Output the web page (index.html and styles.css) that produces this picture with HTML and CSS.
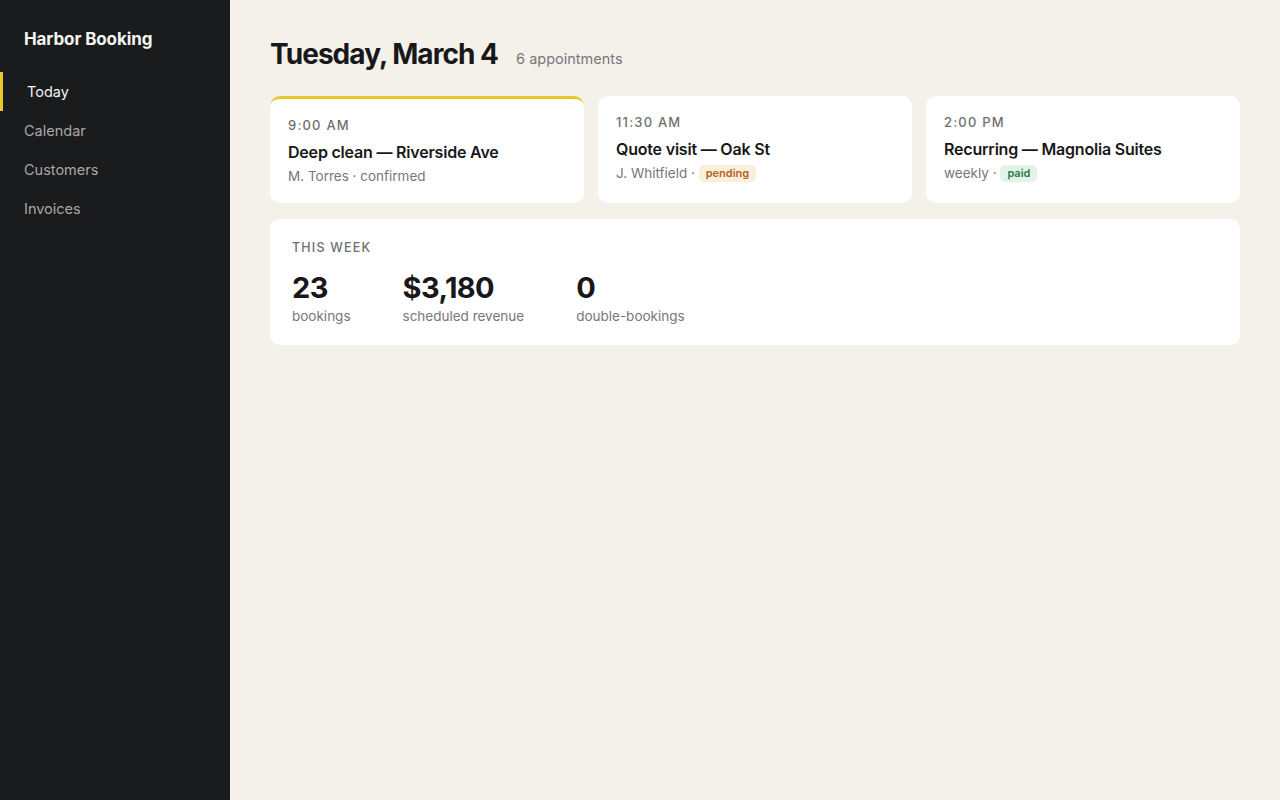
FILE: index.html
```
<!DOCTYPE html>
<html lang="en">
<head>
<meta charset="utf-8">
<title>Harbor Booking</title>
<link rel="stylesheet" href="styles.css">
</head>
<body>
<div class="app">
  <aside class="sidebar">
    <div class="brand">Harbor Booking</div>
    <nav class="nav">
      <a class="nav-item active">Today</a>
      <a class="nav-item">Calendar</a>
      <a class="nav-item">Customers</a>
      <a class="nav-item">Invoices</a>
    </nav>
  </aside>
  <main class="main">
    <header class="page-head">
      <h1>Tuesday, March 4</h1>
      <span class="count">6 appointments</span>
    </header>
    <section class="cards">
      <div class="card current">
        <div class="time">9:00 AM</div>
        <div class="title">Deep clean — Riverside Ave</div>
        <div class="meta">M. Torres · confirmed</div>
      </div>
      <div class="card">
        <div class="time">11:30 AM</div>
        <div class="title">Quote visit — Oak St</div>
        <div class="meta">J. Whitfield · <span class="badge pending">pending</span></div>
      </div>
      <div class="card">
        <div class="time">2:00 PM</div>
        <div class="title">Recurring — Magnolia Suites</div>
        <div class="meta">weekly · <span class="badge paid">paid</span></div>
      </div>
    </section>
    <section class="week">
      <div class="week-label">This week</div>
      <div class="stats">
        <div class="stat"><div class="num">23</div><div class="lbl">bookings</div></div>
        <div class="stat"><div class="num">$3,180</div><div class="lbl">scheduled revenue</div></div>
        <div class="stat"><div class="num">0</div><div class="lbl">double-bookings</div></div>
      </div>
    </section>
  </main>
</div>
</body>
</html>
```
FILE: styles.css
```
* { box-sizing: border-box; }
html, body { margin: 0; height: 100%; }
body {
  font-family: Inter, "Noto Sans", "Liberation Sans", sans-serif;
  background: #f4f1ea;
  color: #18181a;
}
.app { display: flex; min-height: 800px; }
.sidebar {
  width: 230px;
  flex: 0 0 230px;
  background: #1a1b1d;
  padding-top: 28px;
}
.brand {
  color: #f5f5f3;
  font-size: 17px;
  font-weight: 700;
  letter-spacing: -0.1px;
  padding-left: 24px;
  line-height: 22px;
}
.nav { display: flex; flex-direction: column; margin-top: 22px; }
.nav-item {
  display: block;
  height: 39px;
  line-height: 39px;
  font-size: 14.5px;
  color: #a8a8a6;
  border-left: 3px solid transparent;
  padding-left: 21px;
}
.nav-item.active {
  color: #f2f2f0;
  border-left-color: #e8c82a;
  padding-left: 24px;
}
.main { flex: 1; padding: 36px 40px 40px 40px; }
.page-head { display: flex; align-items: baseline; gap: 18px; }
.page-head h1 {
  margin: 0;
  font-size: 28px;
  font-weight: 700;
  letter-spacing: -0.95px;
  line-height: 36px;
}
.count { font-size: 14.5px; color: #77767a; }
.cards {
  display: grid;
  grid-template-columns: repeat(3, 1fr);
  gap: 14px;
  margin-top: 24px;
}
.card {
  background: #fff;
  border-radius: 10px;
  padding: 18px 18px 18px;
  height: 107px;
}
.card.current { border-top: 3px solid #e8c82a; }
.time {
  font-size: 13px;
  font-weight: 500;
  letter-spacing: 1.2px;
  color: #6f6f71;
  line-height: 16px;
  text-transform: uppercase;
}
.title {
  font-size: 16px;
  font-weight: 600;
  letter-spacing: -0.2px;
  margin-top: 9px;
  line-height: 20px;
}
.meta {
  font-size: 13.5px;
  color: #77777a;
  margin-top: 4px;
  line-height: 20px;
}
.badge {
  display: inline-block;
  font-size: 11px;
  font-weight: 600;
  padding: 0 7px;
  border-radius: 5px;
  line-height: 17px;
  vertical-align: 1px;
}
.badge.pending { background: #fbeedc; color: #b5651d; }
.badge.paid { background: #e2f3e8; color: #2f7a4a; }
.week {
  background: #fff;
  border-radius: 10px;
  margin-top: 16px;
  padding: 22px 22px 20px;
  height: 126px;
}
.week-label {
  font-size: 12.5px;
  font-weight: 500;
  letter-spacing: 1.2px;
  text-transform: uppercase;
  color: #6f6f71;
  line-height: 14px;
}
.stats { display: flex; gap: 52px; margin-top: 16px; }
.num {
  font-size: 29px;
  font-weight: 700;
  letter-spacing: -0.6px;
  line-height: 34px;
}
.lbl { font-size: 13.5px; color: #77777a; line-height: 18px; margin-top: 2px; }
```
